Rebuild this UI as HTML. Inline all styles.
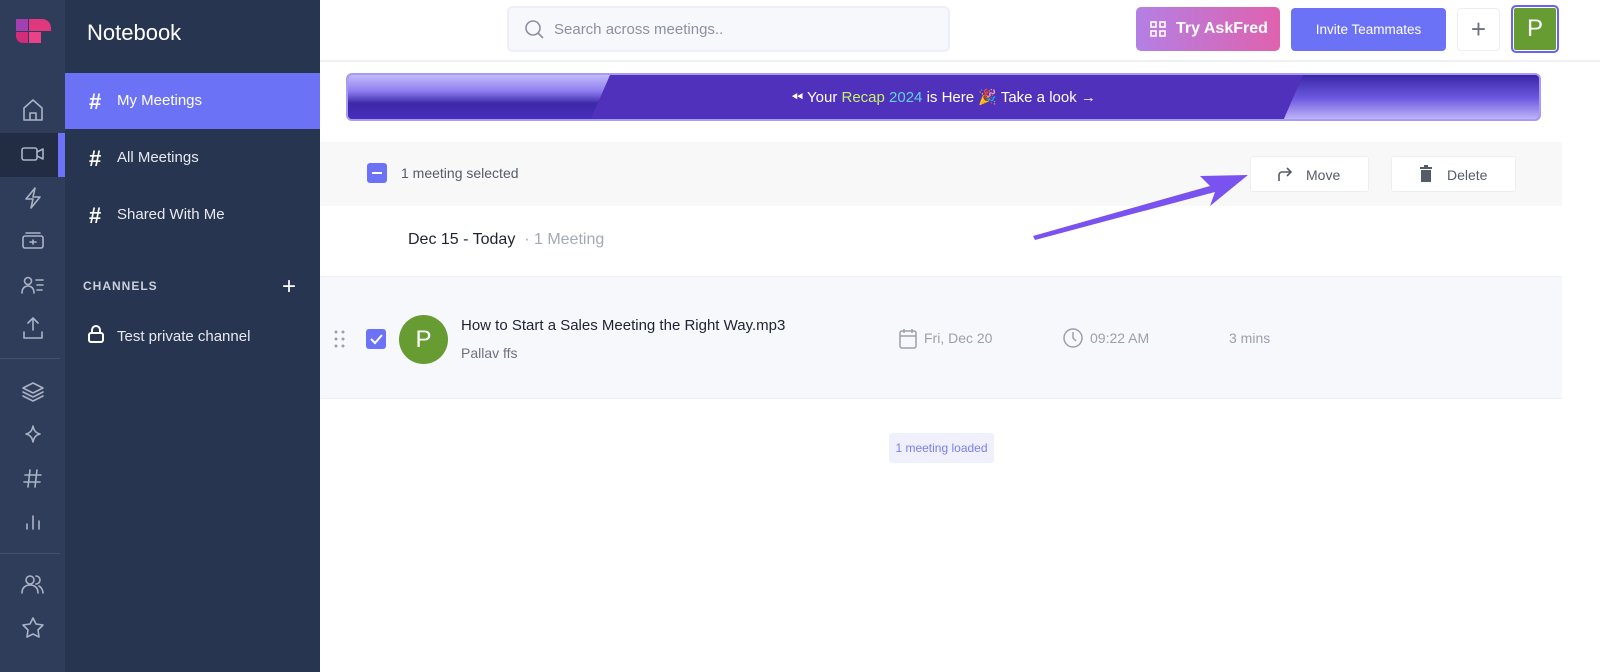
<!DOCTYPE html>
<html><head><meta charset="utf-8"><style>
*{box-sizing:border-box;margin:0;padding:0}
body{width:1600px;height:672px;overflow:hidden;font-family:"Liberation Sans",sans-serif;background:#fff;position:relative}
.rail{position:absolute;left:0;top:0;width:65px;height:672px;background:#303d5a}
.panel{position:absolute;left:65px;top:0;width:255px;height:672px;background:#283550;color:#fff}
.abs{position:absolute}
svg{display:block}
</style></head><body>
<div class="rail">
  <div class="abs" style="left:16px;top:19px;width:12px;height:12px;background:#a33fae"></div>
  <div class="abs" style="left:29px;top:19px;width:22px;height:12px;background:#e0387e;border-top-right-radius:9px"></div>
  <div class="abs" style="left:16px;top:32px;width:12px;height:11px;background:#d12d7a;border-bottom-left-radius:7px"></div>
  <div class="abs" style="left:29px;top:32px;width:12px;height:11px;background:#ea4289"></div>
  <div class="abs" style="left:0;top:133px;width:58px;height:44px;background:#222c42"></div>
  <div class="abs" style="left:58px;top:133px;width:7px;height:44px;background:#6c72f6"></div>
  <div class="abs" style="left:0;top:358px;width:60px;height:1px;background:#46526c"></div>
  <div class="abs" style="left:0;top:553px;width:60px;height:1px;background:#46526c"></div>
  <svg class="abs" style="left:0;top:0" width="65" height="672" fill="none" stroke="#aab3c5" stroke-width="1.6" stroke-linecap="round" stroke-linejoin="round">
    <g transform="translate(33,110)"><path d="M-9 -2l9-8 9 8v12h-18z M-3 10v-7h6v7"/></g>
    <g transform="translate(33,154)"><rect x="-11" y="-6" width="15" height="12" rx="2"/><path d="M4 -2l6-3v10l-6-3"/></g>
    <g transform="translate(33,198)"><path d="M2 -10l-9 11h7l-2 9 9-11h-7z"/></g>
    <g transform="translate(33,241)"><rect x="-10" y="-5" width="20" height="12" rx="2"/><path d="M-7 -8h14 M0 -1v4 M-3 1h6"/></g>
    <g transform="translate(33,285)"><circle cx="-5" cy="-4" r="3.5"/><path d="M-11 8c0-5 3-7 6-7s6 2 6 7 M3 -5h7 M4 0h6 M4 5h5"/></g>
    <g transform="translate(33,330)"><path d="M0 0v-12 M-5 -7l5-5 5 5 M-9 2v6h18v-6"/></g>
    <g transform="translate(33,390)"><path d="M0 -7l-10 5 10 5 10-5z M-10 2l10 5 10-5 M-10 6l10 5 10-5"/></g>
    <g transform="translate(33,434)"><path d="M0 -8c1 5 3 7 7 8-4 1-6 3-7 8-1-5-3-7-7-8 4-1 6-3 7-8z"/></g>
    <g transform="translate(33,478)"><path d="M-3 -8l-2 17 M4 -8l-2 17 M-8 -3h16 M-9 4h16"/></g>
    <g transform="translate(33,522)"><path d="M-6 7v-5 M0 7v-13 M6 7v-8"/></g>
    <g transform="translate(33,584)"><circle cx="-3" cy="-4" r="4"/><path d="M-11 9c0-5 3-8 8-8s8 3 8 8 M3 -8a4 4 0 010 8 M6 2c2 1 4 4 4 7"/></g>
    <g transform="translate(33,628)"><path d="M0 -10l3 6 7 1-5 5 1 7-6-3-6 3 1-7-5-5 7-1z"/></g>
  </svg>
</div>
<div class="panel">
  <div class="abs" style="left:22px;top:20px;font-size:22px;">Notebook</div>
  <div class="abs" style="left:0;top:73px;width:255px;height:56px;background:#6c72f6"></div>
  <div class="abs" style="left:24px;top:89px;font-size:22px;font-weight:bold">#</div>
  <div class="abs" style="left:52px;top:92px;font-size:15px">My Meetings</div>
  <div class="abs" style="left:24px;top:146px;font-size:22px;font-weight:bold">#</div>
  <div class="abs" style="left:52px;top:149px;font-size:15px;color:#e6e9f0">All Meetings</div>
  <div class="abs" style="left:24px;top:203px;font-size:22px;font-weight:bold">#</div>
  <div class="abs" style="left:52px;top:206px;font-size:15px;color:#e6e9f0">Shared With Me</div>
  <div class="abs" style="left:18px;top:279px;font-size:12px;letter-spacing:1px;font-weight:bold;color:#c9cfdb">CHANNELS</div>
  <div class="abs" style="left:217px;top:273px;font-size:24px;color:#fff">+</div>
  <svg class="abs" style="left:22px;top:325px" width="18" height="20" fill="none" stroke="#fff" stroke-width="2"><rect x="2" y="8" width="14" height="9" rx="2"/><path d="M5 8V5a4 4 0 018 0v3"/></svg>
  <div class="abs" style="left:52px;top:328px;font-size:15px;color:#e6e9f0">Test private channel</div>
</div>
<div class="abs" style="left:320px;top:0;width:1280px;height:62px;border-bottom:2px solid #eef0f3"></div>
<div class="abs" style="left:507px;top:6px;width:443px;height:46px;background:#f7f8fb;border:2px solid #eeeefb;border-radius:6px"></div>
<svg class="abs" style="left:523px;top:19px" width="22" height="22" fill="none" stroke="#8a91a0" stroke-width="1.6"><circle cx="10" cy="9" r="7"/><path d="M15 14l5 5"/></svg>
<div class="abs" style="left:554px;top:21px;font-size:15px;color:#8a91a0">Search across meetings..</div>
<div class="abs" style="left:1136px;top:7px;width:144px;height:44px;border-radius:5px;background:linear-gradient(90deg,#b47fe4,#df62ae);color:#fff;font-size:16px;font-weight:bold;padding:13px 0 0 40px">Try AskFred</div>
<svg class="abs" style="left:1150px;top:21px" width="16" height="16" fill="none" stroke="#fff" stroke-width="1.6"><rect x="1" y="1" width="5" height="5"/><rect x="10" y="1" width="5" height="5"/><rect x="1" y="10" width="5" height="5"/><rect x="10" y="10" width="5" height="5"/></svg>
<div class="abs" style="left:1291px;top:8px;width:155px;height:43px;border-radius:4px;background:#6c72f6;color:#fff;font-size:13.5px;text-align:center;line-height:43px">Invite Teammates</div>
<div class="abs" style="left:1457px;top:8px;width:43px;height:43px;border-radius:4px;border:1px solid #eceef2;color:#6b7280;font-size:26px;text-align:center;line-height:40px">+</div>
<div class="abs" style="left:1511px;top:5px;width:48px;height:48px;border-radius:5px;border:2px solid #6c62f0;background:#669c31;color:#fff;font-size:24px;text-align:center;line-height:43px;box-shadow:inset 0 0 0 1px #fff">P</div>
<div class="abs" style="left:346px;top:73px;width:1195px;height:48px;border-radius:6px;border:2px solid #a69cf5;background:#4f31bb;overflow:hidden">
  <div class="abs" style="left:0;top:0;width:262px;height:46px;background:linear-gradient(180deg,#c3baf8 0%,#8e7ef0 35%,#3c28a8 62%,#4a2fbf 100%);clip-path:polygon(0 0,262px 0,242px 46px,0 46px)"></div>
  <div class="abs" style="left:935px;top:0;width:260px;height:46px;background:linear-gradient(180deg,#3a26a5 0%,#6b58df 50%,#c6bdf9 100%);clip-path:polygon(20px 0,260px 0,260px 46px,0 46px)"></div>
  <div class="abs" style="left:0;top:13px;width:1191px;text-align:center;color:#fff;font-size:15px">⏪︎ Your <span style="color:#c6f06b">Recap</span> <span style="color:#5ed4e0">2024</span> is Here 🎉 Take a look →</div>
</div>
<div class="abs" style="left:320px;top:142px;width:1242px;height:64px;background:#f8f8f9"></div>
<div class="abs" style="left:367px;top:163px;width:20px;height:20px;border-radius:3px;background:#6c72f6"><div style="margin:9px 5px;height:2px;background:#fff"></div></div>
<div class="abs" style="left:401px;top:165px;font-size:14px;color:#555c68">1 meeting selected</div>
<div class="abs" style="left:1250px;top:156px;width:119px;height:36px;background:#fff;border:1px solid #eceef1;border-radius:3px;font-size:14px;color:#555c68;padding:10px 0 0 55px">Move</div>
<svg class="abs" style="left:1276px;top:165px" width="18" height="18" fill="none" stroke="#555c68" stroke-width="1.6"><path d="M3 16V10a3 3 0 013-3h9 M11 3l4 4-4 4"/></svg>
<div class="abs" style="left:1391px;top:156px;width:125px;height:36px;background:#fff;border:1px solid #eceef1;border-radius:3px;font-size:14px;color:#555c68;padding:10px 0 0 55px">Delete</div>
<svg class="abs" style="left:1419px;top:165px" width="14" height="18" fill="#555c68"><rect x="1" y="2" width="12" height="2"/><rect x="5" y="0" width="4" height="2"/><rect x="2" y="5" width="10" height="12"/></svg>
<svg class="abs" style="left:1030px;top:170px" width="220" height="75"><path d="M5 70 L185 22 L180 36 L218 5 L170 6 L180 16 L3 66 Z" fill="#7a52f0"/></svg>
<div class="abs" style="left:408px;top:231px;font-size:16px;color:#1d2330">Dec 15 - Today <span style="color:#a3a9b5;font-size:16px">&nbsp;·&nbsp;1 Meeting</span></div>
<div class="abs" style="left:320px;top:276px;width:1242px;height:123px;background:#f7f8fc;border-bottom:1px solid #eceef1;border-top:1px solid #f0f1f4"></div>
<svg class="abs" style="left:334px;top:330px" width="12" height="20" fill="#9aa0ab"><circle cx="2" cy="2" r="1.5"/><circle cx="9" cy="2" r="1.5"/><circle cx="2" cy="9" r="1.5"/><circle cx="9" cy="9" r="1.5"/><circle cx="2" cy="16" r="1.5"/><circle cx="9" cy="16" r="1.5"/></svg>
<div class="abs" style="left:366px;top:329px;width:20px;height:20px;border-radius:3px;background:#6c72f6"></div>
<svg class="abs" style="left:366px;top:329px" width="20" height="20" fill="none" stroke="#fff" stroke-width="2"><path d="M5 10l4 4 7-8"/></svg>
<div class="abs" style="left:399px;top:315px;width:49px;height:49px;border-radius:50%;background:#669c31;color:#fff;font-size:24px;text-align:center;line-height:49px">P</div>
<div class="abs" style="left:461px;top:317px;font-size:15px;color:#1d2330">How to Start a Sales Meeting the Right Way.mp3</div>
<div class="abs" style="left:461px;top:345px;font-size:14px;color:#6b7280">Pallav ffs</div>
<svg class="abs" style="left:898px;top:328px" width="20" height="22" fill="none" stroke="#9aa0ab" stroke-width="1.5"><rect x="2" y="3" width="16" height="17" rx="2"/><path d="M2 8h16 M6 1v4 M14 1v4"/></svg>
<div class="abs" style="left:924px;top:330px;font-size:14px;color:#9aa0ab">Fri, Dec 20</div>
<svg class="abs" style="left:1062px;top:327px" width="22" height="22" fill="none" stroke="#9aa0ab" stroke-width="1.5"><circle cx="11" cy="11" r="9"/><path d="M11 5v6l3 3"/></svg>
<div class="abs" style="left:1090px;top:330px;font-size:14px;color:#9aa0ab">09:22 AM</div>
<div class="abs" style="left:1229px;top:330px;font-size:14px;color:#9aa0ab">3 mins</div>
<div class="abs" style="left:889px;top:433px;width:105px;height:30px;background:#f0f0fc;border-radius:3px;color:#7a7ff0;font-size:12px;text-align:center;line-height:30px">1 meeting loaded</div>
</body></html>
